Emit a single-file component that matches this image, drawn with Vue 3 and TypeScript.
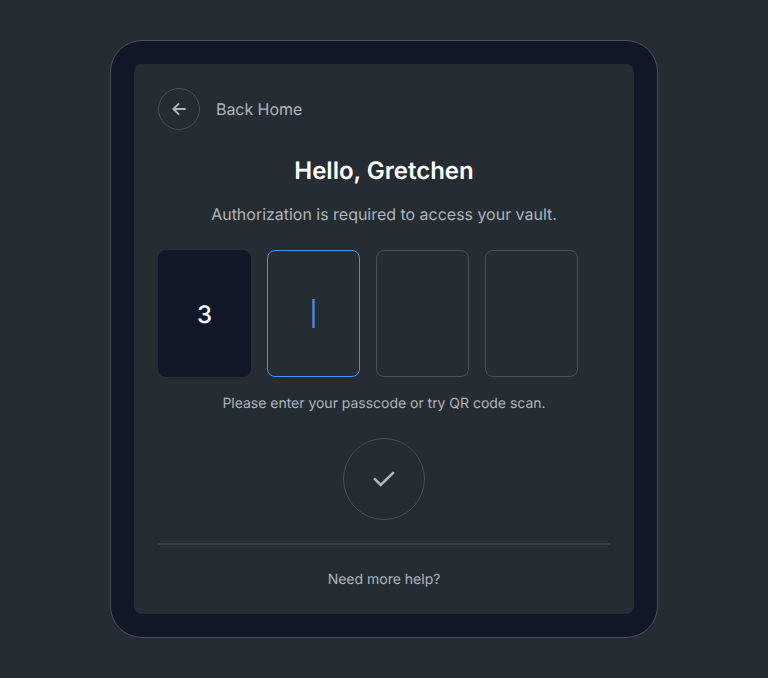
<script setup lang="ts">
import { ref } from 'vue'

interface Slot { value: string; active: boolean }

const name = ref('Gretchen')
const slots = ref<Slot[]>([
  { value: '3', active: false },
  { value: '', active: true },
  { value: '', active: false },
  { value: '', active: false },
])
</script>

<template>
  <main class="page">
    <section class="frame">
      <div class="panel">
        <header class="back">
          <button class="back-button" type="button" aria-label="Back">
            <svg width="20" height="20" viewBox="0 0 20 20" fill="none">
              <path d="M16 10H4.6M9.6 4.8L4.4 10L9.6 15.2" />
            </svg>
          </button>
          <span class="back-label">Back Home</span>
        </header>
        <h1>Hello, {{ name }}</h1>
        <p class="lead">Authorization is required to access your vault.</p>
        <div class="slots">
          <div
            v-for="(slot, i) in slots"
            :key="i"
            class="slot"
            :class="{ filled: slot.value, active: slot.active }"
          >
            <span v-if="slot.value">{{ slot.value }}</span>
            <i v-else-if="slot.active" class="caret"></i>
          </div>
        </div>
        <p class="hint">Please enter your passcode or try QR code scan.</p>
        <button class="confirm" type="button" aria-label="Confirm">
          <svg width="32" height="32" viewBox="0 0 32 32" fill="none">
            <path d="M6.2 15.4L12.7 21.9L25.9 9.1" />
          </svg>
        </button>
        <div class="divider"></div>
        <footer>Need more help?</footer>
      </div>
    </section>
  </main>
</template>

<style>
body {
  margin: 0;
  background: #262d32;
}
</style>

<style scoped>
.page {
  box-sizing: border-box;
  height: 678px;
  padding-top: 40px;
  background: #262d32;
  font-family: Inter, "Liberation Sans", sans-serif;
  color: #adb5bd;
  text-rendering: geometricPrecision;
}
.frame {
  box-sizing: border-box;
  width: 548px;
  height: 598px;
  margin: 0 auto;
  padding: 23px;
  border: 1px solid #495057;
  border-radius: 32px;
  background: #101726;
}
.panel {
  box-sizing: border-box;
  height: 550px;
  padding: 24px;
  border-radius: 8px;
  background: #262d32;
  display: flex;
  flex-direction: column;
}
.back {
  display: flex;
  align-items: center;
  gap: 16px;
  font-size: 16px;
  line-height: 24px;
}
.back-label {
  letter-spacing: -0.06px;
}
button {
  box-sizing: border-box;
  display: flex;
  align-items: center;
  justify-content: center;
  padding: 0;
  border: 1px solid #495057;
  border-radius: 50%;
  background: transparent;
}
.back-button {
  width: 42px;
  height: 42px;
}
.back-button path {
  stroke: #adb5bd;
  stroke-width: 1.9;
  stroke-linecap: round;
  stroke-linejoin: round;
}
h1 {
  margin: 24px 0 0;
  font-size: 24px;
  font-weight: 600;
  line-height: 33px;
  text-align: center;
  color: #fff;
}
p {
  margin: 0;
  text-align: center;
}
.lead {
  margin-top: 16px;
  font-size: 16px;
  line-height: 23px;
  letter-spacing: -0.02px;
}
.slots {
  display: flex;
  gap: 16px;
  margin-top: 24px;
}
.slot {
  box-sizing: border-box;
  width: 93px;
  height: 127px;
  border: 1px solid #495057;
  border-radius: 8px;
  display: flex;
  align-items: center;
  justify-content: center;
  font-size: 24px;
  line-height: 30px;
  font-weight: 500;
  color: #fff;
}
.filled {
  padding-top: 2px;
  background: #101726;
  border-color: #101726;
}
.active {
  border-color: #4a90e2;
}
.caret {
  box-sizing: border-box;
  width: 3px;
  height: 29px;
  border: solid #3c6ca8;
  border-width: 0 1px;
  background: #4a90e2;
}
.hint {
  margin-top: 17px;
  font-size: 14px;
  line-height: 20px;
  letter-spacing: -0.02px;
}
.confirm {
  align-self: center;
  width: 82px;
  height: 82px;
  margin-top: 24px;
}
.confirm path {
  stroke: #adb5bd;
  stroke-width: 2.6;
}
.divider {
  height: 2px;
  margin-top: 23px;
  border-radius: 1px;
  background: #394046;
}
footer {
  margin-top: 24px;
  font-size: 14px;
  line-height: 21px;
  text-align: center;
}
</style>
